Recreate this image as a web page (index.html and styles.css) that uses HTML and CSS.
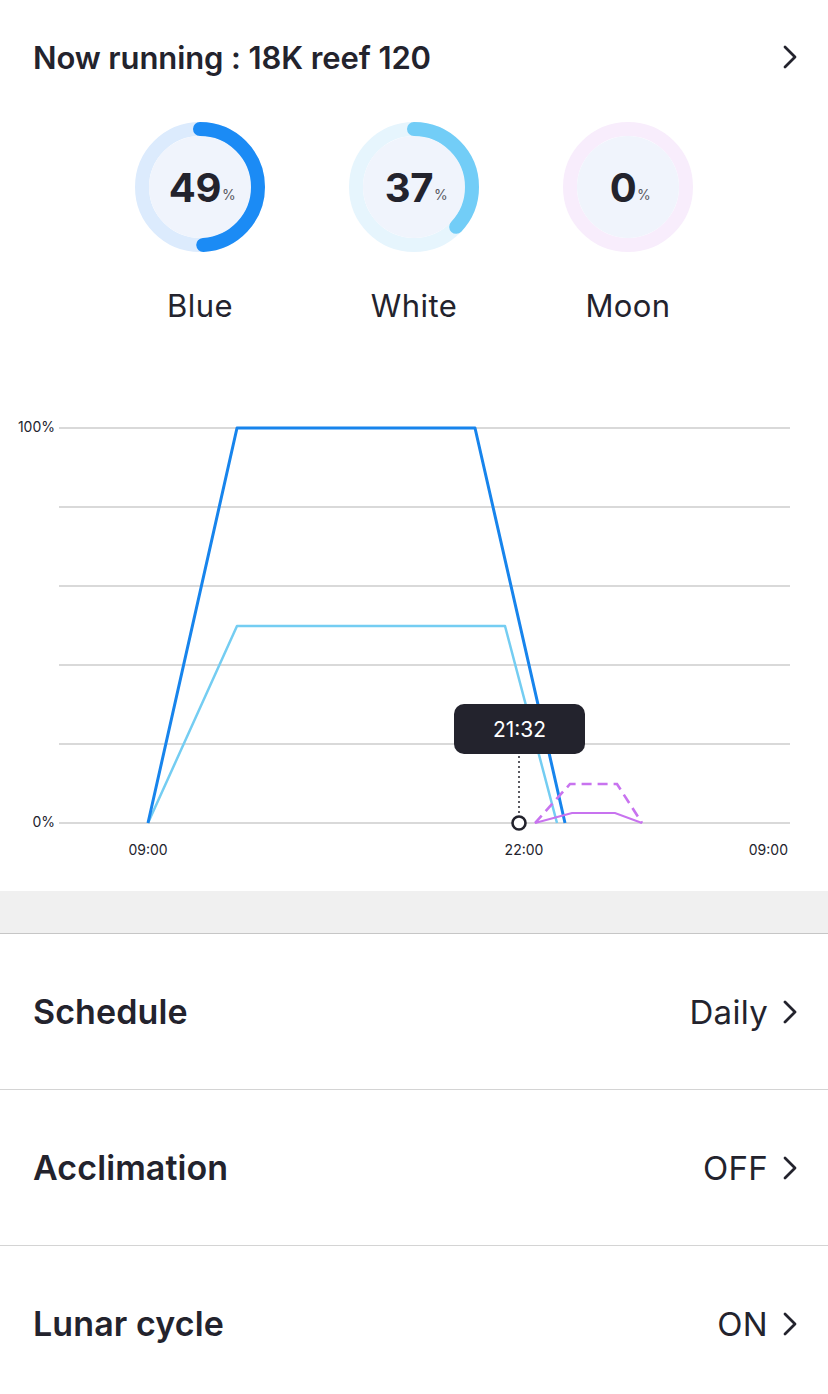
FILE: index.html
```html
<!DOCTYPE html>
<html lang="en">
<head>
    <meta charset="UTF-8">
    <meta name="viewport" content="width=device-width, initial-scale=1.0">
    <title>Now running</title>
    <link rel="stylesheet" href="styles.css">
</head>
<body>
    <div class="header">
        <div class="header-title">Now running : 18K reef 120</div>
        <svg class="chevron" viewBox="0 0 16 26"><polyline points="3,3 13,13 3,23"/></svg>
    </div>

    <div class="gauges">
        <div class="gauge">
            <div class="ring">
                <svg viewBox="0 0 130 130">
                    <circle class="ring-bg blue-bg" cx="65" cy="65" r="58"/>
                    <circle class="ring-inner" cx="65" cy="65" r="51"/>
                    <circle class="ring-arc blue-arc" cx="65" cy="65" r="58" stroke-dasharray="178.6 400"/>
                </svg>
                <div class="value">49<span class="pct">%</span></div>
            </div>
            <div class="gauge-label">Blue</div>
        </div>
        <div class="gauge">
            <div class="ring">
                <svg viewBox="0 0 130 130">
                    <circle class="ring-bg white-bg" cx="65" cy="65" r="58"/>
                    <circle class="ring-inner" cx="65" cy="65" r="51"/>
                    <circle class="ring-arc white-arc" cx="65" cy="65" r="58" stroke-dasharray="134.8 400"/>
                </svg>
                <div class="value">37<span class="pct">%</span></div>
            </div>
            <div class="gauge-label">White</div>
        </div>
        <div class="gauge">
            <div class="ring">
                <svg viewBox="0 0 130 130">
                    <circle class="ring-bg moon-bg" cx="65" cy="65" r="58"/>
                    <circle class="ring-inner" cx="65" cy="65" r="51"/>
                </svg>
                <div class="value">0<span class="pct">%</span></div>
            </div>
            <div class="gauge-label">Moon</div>
        </div>
    </div>

    <svg class="chart" viewBox="0 0 828 540" width="828" height="540">
        <g class="grid">
            <line x1="59" y1="77" x2="790" y2="77"/>
            <line x1="59" y1="156" x2="790" y2="156"/>
            <line x1="59" y1="235" x2="790" y2="235"/>
            <line x1="59" y1="314" x2="790" y2="314"/>
            <line x1="59" y1="393" x2="790" y2="393"/>
            <line x1="59" y1="472" x2="790" y2="472"/>
        </g>
        <text class="axis" x="55" y="81" text-anchor="end">100%</text>
        <text class="axis" x="55" y="476" text-anchor="end">0%</text>
        <text class="axis" x="148" y="504" text-anchor="middle">09:00</text>
        <text class="axis" x="524" y="504" text-anchor="middle">22:00</text>
        <text class="axis" x="788" y="504" text-anchor="end">09:00</text>

        <polyline class="line-white" points="148,472 237,275 505,275 557,472"/>
        <polyline class="line-blue" points="148,472 237,77 475,77 565,472"/>
        <polyline class="line-moon-dash" points="535,472 570,433 617,433 642,472"/>
        <polyline class="line-moon" points="535,472 572,462 615,462 642,472"/>

        <line class="cursor" x1="519" y1="405" x2="519" y2="463"/>
        <circle class="cursor-dot" cx="519" cy="472" r="6.5"/>
        <rect class="tip" x="454" y="353" width="131" height="50" rx="10"/>
        <text class="tip-text" x="519.5" y="386" text-anchor="middle">21:32</text>
    </svg>

    <div class="band"></div>

    <div class="row">
        <div class="row-title">Schedule</div>
        <div class="row-value">Daily
            <svg class="chevron" viewBox="0 0 16 26"><polyline points="3,3 13,13 3,23"/></svg>
        </div>
    </div>
    <div class="row">
        <div class="row-title">Acclimation</div>
        <div class="row-value">OFF
            <svg class="chevron" viewBox="0 0 16 26"><polyline points="3,3 13,13 3,23"/></svg>
        </div>
    </div>
    <div class="row">
        <div class="row-title">Lunar cycle</div>
        <div class="row-value">ON
            <svg class="chevron" viewBox="0 0 16 26"><polyline points="3,3 13,13 3,23"/></svg>
        </div>
    </div>
</body>
</html>
```

FILE: styles.css
```css
body {
    margin: 0;
    font-family: Inter, "Noto Sans", sans-serif;
    color: #23232d;
    background: #fff;
    width: 828px;
}
.header {
    height: 114px;
    display: flex;
    align-items: center;
    justify-content: space-between;
    padding: 0 30px 0 33px;
}
.header-title {
    font-size: 31px;
    font-weight: 600;
    letter-spacing: -0.1px;
}
.chevron {
    width: 16px;
    height: 26px;
    fill: none;
    stroke: #23232d;
    stroke-width: 2.8;
    stroke-linecap: round;
    stroke-linejoin: round;
}
.gauges {
    display: flex;
    justify-content: center;
    margin-top: 8px;
}
.gauge {
    width: 214px;
    display: flex;
    flex-direction: column;
    align-items: center;
}
.ring {
    position: relative;
    width: 130px;
    height: 130px;
}
.ring svg {
    width: 130px;
    height: 130px;
    display: block;
}
.ring-bg {
    fill: none;
    stroke-width: 14;
}
.blue-bg { stroke: #dcebfd; }
.white-bg { stroke: #e6f5fd; }
.moon-bg { stroke: #f8edfc; }
.ring-inner {
    fill: #f0f4fc;
}
.ring-arc {
    fill: none;
    stroke-width: 14;
    stroke-linecap: round;
    transform: rotate(-90deg);
    transform-origin: 65px 65px;
}
.blue-arc { stroke: #1b8bf5; }
.white-arc { stroke: #72cdf7; }
.value {
    position: absolute;
    inset: 0;
    display: flex;
    align-items: center;
    justify-content: center;
    font-size: 40px;
    font-weight: 700;
    letter-spacing: -0.5px;
    padding-left: 4px;
}
.pct {
    font-size: 14px;
    font-weight: 400;
    color: #5a5a62;
    margin-top: 14px;
    margin-left: 1px;
}
.gauge-label {
    margin-top: 36px;
    font-size: 31px;
    line-height: 36px;
    letter-spacing: 0.4px;
}
.chart {
    display: block;
    margin-top: 27px;
}
.grid line {
    stroke: #b3b3b3;
    stroke-width: 1;
}
.axis {
    font-family: Inter, sans-serif;
    font-size: 14px;
    fill: #23232d;
}
.line-blue {
    fill: none;
    stroke: #1784ec;
    stroke-width: 3;
    stroke-linejoin: round;
}
.line-white {
    fill: none;
    stroke: #74cdf2;
    stroke-width: 2.5;
    stroke-linejoin: round;
}
.line-moon-dash {
    fill: none;
    stroke: #c873ef;
    stroke-width: 2.6;
    stroke-dasharray: 10 6;
}
.line-moon {
    fill: none;
    stroke: #c873ef;
    stroke-width: 2;
}
.cursor {
    stroke: #23232d;
    stroke-width: 1.5;
    stroke-dasharray: 2 3;
}
.cursor-dot {
    fill: #fff;
    stroke: #23232d;
    stroke-width: 2.6;
}
.tip {
    fill: #23232d;
}
.tip-text {
    font-family: Inter, sans-serif;
    font-size: 21px;
    fill: #fff;
}
.band {
    height: 42px;
    background: #f0f0f0;
    border-bottom: 1px solid #c6c6c6;
}
.row {
    box-sizing: border-box;
    height: 156px;
    display: flex;
    align-items: center;
    justify-content: space-between;
    padding: 0 30px 0 33px;
    border-bottom: 1px solid #d4d4d4;
}
.row-title {
    font-size: 34px;
    font-weight: 600;
    letter-spacing: 0.1px;
}
.row-value {
    display: flex;
    align-items: center;
    gap: 14px;
    font-size: 33px;
    letter-spacing: 0.3px;
}
```
